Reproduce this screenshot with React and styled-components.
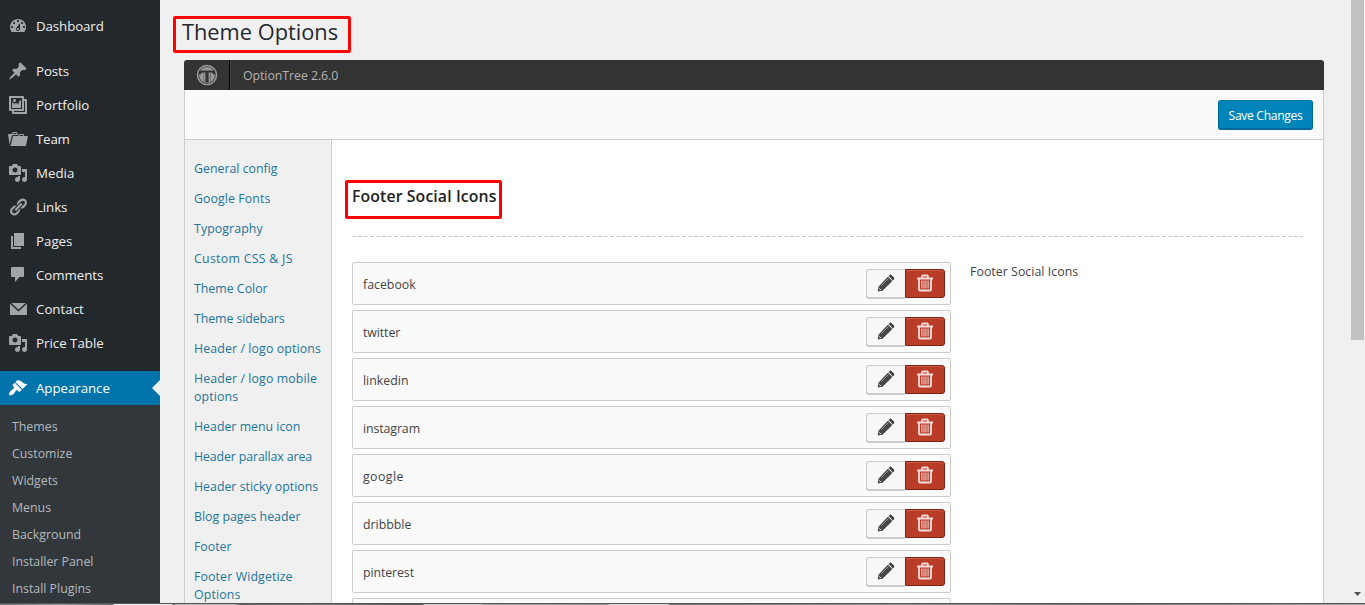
import React from "react";
import styled, { createGlobalStyle } from "styled-components";

const Global = createGlobalStyle`
  * { box-sizing: border-box; }
  html, body { margin: 0; height: 605px; overflow: hidden; background: #f0f0f0; }
  body { font-family: "Open Sans", "Noto Sans", sans-serif; font-size: 12.35px; color: #444; }
`;

const Page = styled.div`
  display: flex;
  width: 1365px;
  height: 605px;
  overflow: hidden;
  position: relative;
`;

const AdminMenu = styled.nav`
  width: 160px;
  flex: none;
  height: 605px;
  padding-top: 9px;
  background: #23282d;
`;

const MenuItem = styled.a`
  display: flex;
  align-items: center;
  height: 34px;
  padding-left: 8px;
  margin-top: ${(p) => (p.$gap ? 11 : 0)}px;
  font-size: 13.3px;
  letter-spacing: ${(p) => p.$ls || 0}px;
  color: ${(p) => (p.$active ? "#fff" : "#eee")};
  background: ${(p) => (p.$active ? "#0073aa" : "transparent")};
  position: relative;
  svg { width: 20px; height: 20px; margin-right: 8px; fill: ${(p) => (p.$active ? "#fff" : "#a0a5aa")}; }
`;

const Arrow = styled.i`
  position: absolute;
  right: 0;
  top: 9px;
  border: 8px solid transparent;
  border-left: 0;
  border-right-color: #f0f0f0;
`;

const SubMenu = styled.div`
  background: #32373c;
  padding: 8px 12px;
  height: 200px;
`;

const SubItem = styled.a`
  display: block;
  height: 27px;
  line-height: 27px;
  color: #b4b9be;
`;

const Content = styled.main`
  flex: 1;
  padding: 16px 0 0 13px;
`;

const Title = styled.h1`
  width: 178px;
  height: 37px;
  margin: 0;
  padding-left: 6px;
  border: 3px solid #f00;
  border-radius: 2px;
  font-size: 21.8px;
  line-height: 25px;
  font-weight: 400;
  color: #23282d;
  white-space: nowrap;
`;

const Panel = styled.section`
  width: 1140px;
  margin: 7px 0 0 11px;
`;

const PanelHeader = styled.header`
  display: flex;
  height: 30px;
  background: #333;
  border-radius: 3px 3px 0 0;
  color: #b4b4b4;
  line-height: 31px;
  letter-spacing: -0.06px;
`;

const LogoCell = styled.div`
  width: 46px;
  height: 30px;
  display: flex;
  align-items: center;
  justify-content: center;
  border-right: 1px solid #000;
  box-shadow: 1px 0 0 #444;
  margin-right: 13px;
`;

const ActionBar = styled.div`
  display: flex;
  justify-content: flex-end;
  height: 50px;
  padding: 10px 10px 0 0;
  background: #fafafa;
  border: 1px solid #ccc;
  border-top: 0;
`;

const SaveButton = styled.button`
  width: 95px;
  height: 30px;
  padding: 0;
  border: 1px solid #006799;
  border-top-color: #0073aa;
  border-radius: 3px;
  background: #0085ba;
  box-shadow: inset 0 -1px 0 #006799;
  color: #fff;
  font: 12.1px "Open Sans", sans-serif;
  letter-spacing: -0.32px;
`;

const PanelBody = styled.div`
  display: flex;
  height: 470px;
  border: 1px solid #ccc;
  border-top: 0;
  background: #fff;
`;

const Tabs = styled.aside`
  width: 147px;
  flex: none;
  padding: 20px 0 0 9px;
  border-right: 1px solid #ccc;
  background: #f0f0f0;
`;

const Tab = styled.a`
  display: block;
  line-height: 18px;
  margin-bottom: 12px;
  color: #21759b;
  white-space: pre-line;
  letter-spacing: ${(p) => p.$ls || 0}px;
`;

const Settings = styled.div`
  flex: 1;
  padding: 40px 20px 0 13px;
`;

const SectionTitle = styled.h3`
  width: 157px;
  height: 39px;
  margin: 0;
  padding-left: 4px;
  border: 3px solid #f00;
  border-radius: 2px;
  font-size: 15.8px;
  line-height: 27px;
  font-weight: 600;
  letter-spacing: 0.12px;
  color: #222;
  white-space: nowrap;
`;

const Divider = styled.div`
  height: 1px;
  margin: 17px 0 25px 7px;
  background: repeating-linear-gradient(90deg, #ccc 0 4px, transparent 4px 6px);
`;

const Columns = styled.div`
  display: flex;
  padding-left: 7px;
`;

const List = styled.div`
  width: 599px;
  display: flex;
  flex-direction: column;
  gap: 5px;
`;

const Row = styled.div`
  display: flex;
  align-items: flex-start;
  justify-content: space-between;
  height: 43px;
  padding: 6px 5px 0 10px;
  border: 1px solid #ccc;
  border-radius: 2px;
  background: #fafafa;
  line-height: 18px;
`;

const RowLabel = styled.span`
  padding-top: 7px;
  letter-spacing: ${(p) => p.$ls || 0}px;
`;

const Buttons = styled.div`
  display: flex;
`;

const EditButton = styled.span`
  width: 39px;
  height: 30px;
  display: flex;
  align-items: flex-start;
  padding-top: 4px;
  justify-content: center;
  border: 1px solid #ccc;
  border-right: 0;
  border-radius: 3px 0 0 3px;
  box-shadow: inset 0 -1px 0 #ccc;
  background: #f7f7f7;
`;

const DeleteButton = styled(EditButton)`
  width: 40px;
  height: 29px;
  border: 1px solid #7f2213;
  border-radius: 0 3px 3px 0;
  background: #b83c28;
  box-shadow: inset 0 1px 0 #cc5a48;
`;

const Description = styled.p`
  margin: 1px 0 0 19px;
  line-height: 18px;
  letter-spacing: 0.04px;
`;

const Scrollbar = styled.div`
  width: 14px;
  flex: none;
  height: 603px;
  display: flex;
  flex-direction: column;
  justify-content: space-between;
  align-items: flex-start;
`;

const Thumb = styled.div`
  width: 13px;
  height: 340px;
  background: #c1c1c1;
`;

const BottomEdge = styled.div`
  position: absolute;
  left: 0;
  right: 0;
  bottom: 0;
  height: 2px;
  background: linear-gradient(90deg, #777, #999 60px, #666 113px, #eee 114px 172px, #555 173px, #bbb 176px 234px, #666 240px, #777 330px, #555 423px, #ccc 424px 482px, #aaa 483px, #999 608px, #ddd 610px 668px, #777 670px, #999 900px, #777 1100px, #aaa);
  border-top: 1px solid #555;
`;

const paths = {
  dashboard: "M3.76 16h12.48c1.1-1.37 1.76-3.11 1.76-5 0-4.42-3.58-8-8-8s-8 3.58-8 8c0 1.89.66 3.63 1.76 5zM10 4c.55 0 1 .45 1 1s-.45 1-1 1-1-.45-1-1 .45-1 1-1zM6 6c.55 0 1 .45 1 1s-.45 1-1 1-1-.45-1-1 .45-1 1-1zm8 0c.55 0 1 .45 1 1s-.45 1-1 1-1-.45-1-1 .45-1 1-1zm-5.37 5.55L12 7v6c0 1.1-.9 2-2 2s-2-.9-2-2c0-.57.24-1.08.63-1.45zM4 10c.55 0 1 .45 1 1s-.45 1-1 1-1-.45-1-1 .45-1 1-1zm12 0c.55 0 1 .45 1 1s-.45 1-1 1-1-.45-1-1 .45-1 1-1zm-5 3c0-.55-.45-1-1-1s-1 .45-1 1 .45 1 1 1 1-.45 1-1z",
  pin: "M10.44 3.02l1.82-1.82 6.36 6.35-1.83 1.82c-1.05-.68-2.48-.57-3.41.36l-.75.75c-.92.93-1.04 2.35-.35 3.41l-1.83 1.82-2.41-2.41-2.8 2.79c-.42.42-3.38 2.71-3.8 2.29s1.86-3.39 2.28-3.81l2.79-2.79L4.1 9.36l1.83-1.82c1.05.69 2.48.57 3.4-.36l.75-.75c.93-.92 1.05-2.35.36-3.41z",
  gallery: "M16 4h1.96c.57 0 1.04.47 1.04 1.04v12.92c0 .57-.47 1.04-1.04 1.04H5.04C4.47 19 4 18.53 4 17.96V16H2.04C1.47 16 1 15.53 1 14.96V2.04C1 1.47 1.47 1 2.04 1h12.92c.57 0 1.04.47 1.04 1.04V4zM3 14h11V3H3v11zm5-8.5C8 4.67 7.33 4 6.5 4S5 4.67 5 5.5 5.67 7 6.5 7 8 6.33 8 5.5zm2 4.5s1-5 3-5v8H4V7c2 0 2 3 2 3s.33-2 2-2 2 2 2 2zm7 7V6h-1v8.96c0 .57-.47 1.04-1.04 1.04H6v1h11z",
  folder: "M4 5H.78c-.37 0-.74.32-.69.84l1.56 9.99S3.5 8.47 3.86 6.7c.11-.53.61-.7.98-.7H10s-.7-2.08-.77-2.31C9.11 3.25 8.89 3 8.45 3H5.14c-.36 0-.7.23-.8.64C4.25 4.04 4 5 4 5zm4.88 0h-4s.42-1 .87-1h2.13c.48 0 1 1 1 1zM2.67 16.25c-.31.47-.76.75-1.26.75h15.73c.54 0 .92-.31 1.03-.83.44-2.19 1.68-8.44 1.68-8.44.07-.5-.3-.73-.62-.73H16V5.53c0-.16-.26-.53-.66-.53h-3.76c-.52 0-.87.58-.87.58L10 7H5.59c-.32 0-.63.19-.69.5 0 0-1.59 6.7-1.72 7.33-.07.37-.22.99-.51 1.42zM15.38 7H11s.58-1 1.13-1h2.29c.71 0 .96 1 .96 1z",
  media: "M13 11V4c0-.55-.45-1-1-1h-1.67L9 1H5L3.67 3H2c-.55 0-1 .45-1 1v7c0 .55.45 1 1 1h10c.55 0 1-.45 1-1zM7 4.5c1.38 0 2.5 1.12 2.5 2.5S8.38 9.5 7 9.5 4.5 8.38 4.5 7 5.62 4.5 7 4.5zM14 6h5v10.5c0 1.38-1.12 2.5-2.5 2.5S14 17.88 14 16.5s1.12-2.5 2.5-2.5c.17 0 .34.02.5.05V9h-3V6zm-4 8.05V13h2v3.5c0 1.38-1.12 2.5-2.5 2.5S7 17.88 7 16.5 8.12 14 9.5 14c.17 0 .34.02.5.05z",
  link: "M17.74 2.76c1.68 1.69 1.68 4.41 0 6.1l-1.53 1.52c-1.12 1.12-2.7 1.47-4.14 1.09l2.62-2.61.76-.77.76-.76c.84-.84.84-2.2 0-3.04-.84-.85-2.2-.85-3.04 0l-.77.76-3.38 3.38c-.37-1.44-.02-3.02 1.1-4.14l1.52-1.53c1.69-1.68 4.42-1.68 6.1 0zM8.59 13.43l5.34-5.34c.42-.42.42-1.1 0-1.52-.44-.43-1.13-.39-1.53 0l-5.33 5.34c-.42.42-.42 1.1 0 1.52.44.43 1.13.39 1.52 0zm-.76 2.29l4.14-4.15c.38 1.44.03 3.02-1.09 4.14l-1.52 1.53c-1.69 1.68-4.41 1.68-6.1 0-1.68-1.68-1.68-4.42 0-6.1l1.53-1.52c1.12-1.12 2.7-1.47 4.14-1.1l-4.14 4.15c-.85.84-.85 2.2 0 3.05.84.84 2.2.84 3.04 0z",
  page: "M6 15V2h10v13H6zm-1 1h8v2H3V5h2v11z",
  comment: "M4 2h11q1 0 1 1v8q0 1-1 1h-3.500l-4.500 5v-5H4q-1 0-1-1V3q0-1 1-1z",
  mail: "M3.200 4h14.600l-7.300 6.400zM2 4.800l8.500 7.600L19 4.800V15.500q0 .5-.5.5h-16q-.5 0-.5-.5z",
  brush: "M14.48 11.06L7.41 3.99l1.5-1.5c.5-.56 2.3-.47 3.51.32 1.21.8 1.43 1.28 2.91 2.1 1.18.64 2.45 1.26 4.45.85zm-.71.71L6.7 4.7 4.93 6.47c-.39.39-.39 1.02 0 1.41l1.06 1.06c.39.39.39 1.03 0 1.42-.6.6-1.43 1.11-2.21 1.69-.35.26-.7.53-1.01.84C1.43 14.23.4 16.08 1.4 17.07c.99 1 2.84-.03 4.18-1.36.31-.31.58-.66.85-1.02.57-.78 1.08-1.61 1.69-2.21.39-.39 1.02-.39 1.41 0l1.06 1.06c.39.39 1.02.39 1.41 0z",
};

const menu = [
  { label: "Dashboard", icon: "dashboard", ls: -0.1 },
  { label: "Posts", icon: "pin", gap: true, ls: -0.1 },
  { label: "Portfolio", icon: "gallery" },
  { label: "Team", icon: "folder", ls: -0.2 },
  { label: "Media", icon: "media" },
  { label: "Links", icon: "link", ls: -0.1 },
  { label: "Pages", icon: "page" },
  { label: "Comments", icon: "comment", ls: -0.05 },
  { label: "Contact", icon: "mail" },
  { label: "Price Table", icon: "media" },
  { label: "Appearance", icon: "brush", gap: true, active: true, ls: -0.05 },
];

const subMenu = ["Themes", "Customize", "Widgets", "Menus", "Background", "Installer Panel", "Install Plugins"];

const tabs = [
  { label: "General config" },
  { label: "Google Fonts", ls: 0.08 },
  { label: "Typography", ls: 0.08 },
  { label: "Custom CSS & JS", ls: 0.28 },
  { label: "Theme Color" },
  { label: "Theme sidebars", ls: -0.08 },
  { label: "Header / logo options", ls: 0.11 },
  { label: "Header / logo mobile\noptions", ls: 0.11 },
  { label: "Header menu icon" },
  { label: "Header parallax area", ls: -0.12 },
  { label: "Header sticky options" },
  { label: "Blog pages header" },
  { label: "Footer" },
  { label: "Footer Widgetize\nOptions", ls: 0.12 },
];

const networks = [
  { label: "facebook" },
  { label: "twitter", ls: -0.1 },
  { label: "linkedin" },
  { label: "instagram", ls: -0.1 },
  { label: "google", ls: 0.42 },
  { label: "dribbble" },
  { label: "pinterest", ls: -0.1 },
  { label: "" },
];

const Pencil = () => (
  <svg width="18" height="18" viewBox="0 0 18 18" fill="#464646">
    <path d="M12.600 1q.9-.8 1.800 0l2.600 2.600q.8.900 0 1.800L15.900 6.500 11.500 2.100zM10.900 2.700l4.400 4.400L5.800 16.600l-5.100.9.900-5.100z" />
    <path d="M4 12l7.500-7.500" stroke="#aaa" strokeWidth=".8" />
    <path d="M2.200 14.400l1.600 1.600" stroke="#f7f7f7" strokeWidth="1" />
  </svg>
);

const Trash = () => (
  <svg width="18" height="18" viewBox="0 0 18 18" fill="none" stroke="#f8dcd8" strokeWidth="1.800">
    <path d="M1 4.500h16M6 4V2.700Q6 1.500 7 1.500h4q1 0 1 1.200V4M3 4.500V15.500q0 1 1 1h10q1 0 1-1V4.500" />
    <path d="M5.900 6.500v8M8 6.500v8M10 6.500v8M12.100 6.500v8" strokeWidth="1" />
  </svg>
);

const Logo = () => (
  <svg width="22" height="22" viewBox="0 0 22 22">
    <circle cx="11" cy="11" r="9.500" fill="none" stroke="#999" strokeWidth="1.600" />
    <circle cx="11" cy="11" r="8" fill="#999" />
    <path d="M3 6.500h16v4h-1.600Q17 8.700 15 8.500h-2.400V18.500H9.400V8.500H7Q5 8.700 4.600 10.500H3z" fill="#333" />
    <path d="M7.600 9v9M14.400 9v9" stroke="#666" strokeWidth=".7" />
  </svg>
);

export default function App() {
  return (
    <Page>
      <Global />
      <AdminMenu>
        {menu.map((m) => (
          <MenuItem key={m.label} $gap={m.gap} $active={m.active} $ls={m.ls}>
            <svg viewBox="0 0 20 20"><path d={paths[m.icon]} /></svg>
            {m.label}
            {m.active && <Arrow />}
          </MenuItem>
        ))}
        <SubMenu>
          {subMenu.map((s) => <SubItem key={s}>{s}</SubItem>)}
        </SubMenu>
      </AdminMenu>
      <Content>
        <Title>Theme Options</Title>
        <Panel>
          <PanelHeader>
            <LogoCell><Logo /></LogoCell>
            OptionTree 2.6.0
          </PanelHeader>
          <ActionBar><SaveButton>Save Changes</SaveButton></ActionBar>
          <PanelBody>
            <Tabs>{tabs.map((t) => <Tab key={t.label} $ls={t.ls}>{t.label}</Tab>)}</Tabs>
            <Settings>
              <SectionTitle>Footer Social Icons</SectionTitle>
              <Divider />
              <Columns>
                <List>
                  {networks.map((n) => (
                    <Row key={n.label}>
                      <RowLabel $ls={n.ls}>{n.label}</RowLabel>
                      <Buttons>
                        <EditButton><Pencil /></EditButton>
                        <DeleteButton><Trash /></DeleteButton>
                      </Buttons>
                    </Row>
                  ))}
                </List>
                <Description>Footer Social Icons</Description>
              </Columns>
            </Settings>
          </PanelBody>
        </Panel>
      </Content>
      <Scrollbar>
        <Thumb />
        <svg width="13" height="16" viewBox="0 0 13 16"><path d="M3 5h7L6.500 9z" fill="#505050" /></svg>
      </Scrollbar>
      <BottomEdge />
    </Page>
  );
}
